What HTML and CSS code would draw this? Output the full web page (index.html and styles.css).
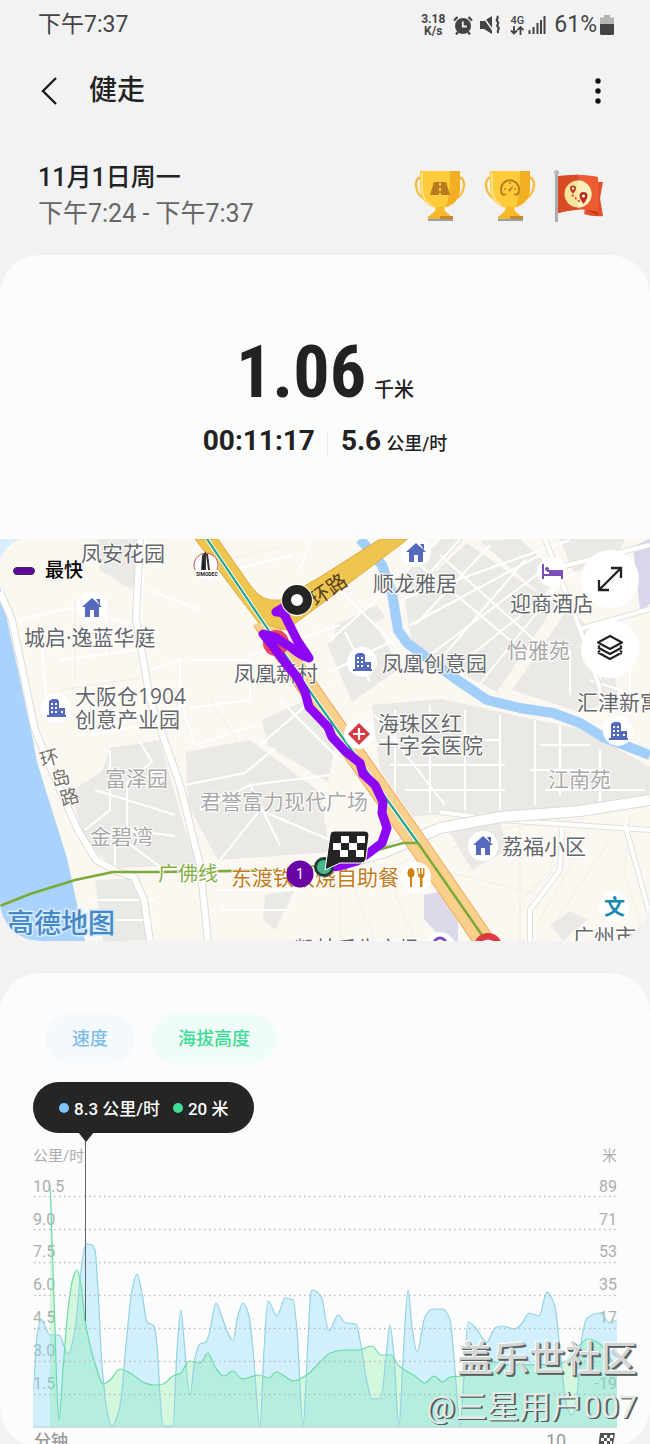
FILE: index.html
```html
<!DOCTYPE html>
<html lang="zh-CN">
<head>
<meta charset="utf-8">
<meta name="viewport" content="width=device-width, initial-scale=1">
<title>健走</title>
<link rel="stylesheet" href="styles.css">
</head>
<body>
<div class="screen">
  <header class="status">
    <span class="status-text">下午7:37</span>
    <div class="status-icons">
      <span class="net">3.18<br>K/s</span>
      <svg class="ic-alarm" width="20" height="20" viewBox="0 0 20 20"><circle cx="10" cy="11" r="8" fill="#444"/><path d="M1 5.500 4.500 2M19 5.500 15.500 2M5 17l-2 2.500M15 17l2 2.500" stroke="#444" stroke-width="2.200"/><path d="M9.800 6.500v5h4" stroke="#f2f2f2" stroke-width="1.800" fill="none"/></svg>
      <svg class="ic-mute" width="20" height="20" viewBox="0 0 20 20"><path d="M0 6h4l8-5v18l-8-5H0z" fill="#444"/><path d="M2 0l12 17" stroke="#f2f2f2" stroke-width="1.600"/><path d="M17 1c2.500 2 -2 3.500 .5 5.500s-2 3.500 .5 5.500 -2 3.500 .5 6" stroke="#444" stroke-width="2.200" fill="none"/></svg>
      <span class="gen"><span>4G</span><svg width="14" height="9" viewBox="0 0 14 9"><path d="M4 0v7M1 4.500l3 3 3-3M10.500 9V1M7.500 4l3-3 3 3" stroke="#444" stroke-width="1.800" fill="none"/></svg></span>
      <svg class="ic-signal" width="18" height="18" viewBox="0 0 18 18"><path d="M1.500 18v-4M5.500 18v-7M9.500 18v-11M13 18v-14M16.500 18V0" stroke="#444" stroke-width="2"/></svg>
      <span class="status-text">61%</span>
      <svg width="14" height="20" viewBox="0 0 14 20"><path d="M4 0h6v2.500h4V9H0V2.500h4z" fill="#b4b4b4"/><path d="M0 9h14v9.500q0 1.500-1.500 1.500h-11Q0 20 0 18.500z" fill="#444"/></svg>
    </div>
  </header>

  <nav class="bar">
    <button class="icon-btn" aria-label="返回"><svg width="18" height="30" viewBox="0 0 18 30"><path d="M16 2 3 15l13 13" fill="none" stroke="#1c1c1c" stroke-width="2.400"/></svg></button>
    <h1>健走</h1>
    <button class="icon-btn" aria-label="更多"><svg width="8" height="28" viewBox="0 0 8 28"><g fill="#111"><circle cx="4" cy="4" r="2.700"/><circle cx="4" cy="14" r="2.700"/><circle cx="4" cy="24" r="2.700"/></g></svg></button>
  </nav>

  <section class="session">
    <div>
      <p class="date">11月1日周一</p>
      <p class="range">下午7:24 - 下午7:37</p>
    </div>
    <div class="awards">
      <svg width="52" height="52" viewBox="0 0 52 52"><path d="M7 7.500C-1 7.500 0 27 14 30M45 7.500c8 0 7 19.500-7 22.500" fill="none" stroke="#f6bd3d" stroke-width="2.400"/><path d="M6 1h40v17c0 13-9 20-20 20S6 31 6 18z" fill="#fecb3b"/><path d="M36 1h10v17c0 10-6 17-14 19 3-7 4-20 4-36z" fill="#f2af23"/><path d="M8 3v15q0 12 9 17" stroke="#ffe08a" stroke-width="2" fill="none"/><path d="M22 37h8l1 4 7 6H14l7-6z" fill="#f7b927"/><path d="M14 46h25v4H14z" fill="#f0b535"/><path d="M26 46h13v4H26z" fill="#cf8625"/><path d="M14 49h25v2H14z" fill="#98a0a8"/><path d="M20 12h12l4 13H16z" fill="#b77a1c"/><path d="M26 13v3M26 18v3M26 23v2" stroke="#ffd463" stroke-width="1.600"/></svg>
      <svg width="52" height="52" viewBox="0 0 52 52"><path d="M7 7.500C-1 7.500 0 27 14 30M45 7.500c8 0 7 19.500-7 22.500" fill="none" stroke="#f6bd3d" stroke-width="2.400"/><path d="M6 1h40v17c0 13-9 20-20 20S6 31 6 18z" fill="#fecb3b"/><path d="M36 1h10v17c0 10-6 17-14 19 3-7 4-20 4-36z" fill="#f2af23"/><path d="M8 3v15q0 12 9 17" stroke="#ffe08a" stroke-width="2" fill="none"/><path d="M22 37h8l1 4 7 6H14l7-6z" fill="#f7b927"/><path d="M14 46h25v4H14z" fill="#f0b535"/><path d="M26 46h13v4H26z" fill="#cf8625"/><path d="M14 49h25v2H14z" fill="#98a0a8"/><path d="M19 25a9 9 0 1 1 14 0" fill="none" stroke="#b77a1c" stroke-width="2"/><path d="M20 19h2M26 12v2M32 19h-2M19 25l3-1M33 25l-3-1" stroke="#b77a1c" stroke-width="1.500"/><path d="M24 20l6-5-4 7z" fill="#b77a1c"/></svg>
      <svg width="52" height="52" viewBox="0 0 52 52"><path d="M36 12h13l-3 16 3 18q-10 1-19-2z" fill="#e2512c"/><path d="M30 38l14 8V12z" fill="#c23a1c"/><path d="M4 6c16-1 26-2 40 1v35c-13-4-24-3-40 1z" fill="#ef5b33"/><path d="M4 6q12-1 21-1.500v35Q14 40 4 43z" fill="#d94a27"/><circle cx="24" cy="24" r="13.500" fill="#ffe59b"/><path d="M24 10.500a13.500 13.500 0 0 1 0 27z" fill="#fff0bd"/><path d="M29.500 34c-3-4-4-6-4-8a4 4 0 0 1 8 0c0 2-1 4-4 8zM19 24c-2-3-3-4-3-5.500a3 3 0 0 1 6 0c0 1.500-1 2.500-3 5.500z" fill="#b9311b"/><circle cx="29.500" cy="26" r="1.500" fill="#fff"/><circle cx="19" cy="18.500" r="1.200" fill="#fff"/><path d="M18 25l8 7" stroke="#b9311b" stroke-width="1.500" stroke-dasharray="2 2"/><path d="M2.500 3v49" stroke="#a9adb2" stroke-width="3"/><circle cx="2.500" cy="2.500" r="2.500" fill="#b9bcc0"/></svg>
    </div>
  </section>

  <main>
  <section class="card workout">
    <div class="summary">
      <p class="distance"><span class="digits">1.06</span><span class="unit">千米</span></p>
      <p class="stats"><span class="num">00:11:17</span><span class="rule"></span><span class="num">5.6</span><span class="small">公里/时</span></p>
    </div>
    <div class="map">
      <svg class="map-art" viewBox="0 539 650 402" role="img" aria-label="路线地图">
        <rect y="539" width="650" height="402" fill="#fbf8f2"/>
        <path d="M0 539h20Q6 545 0 559z" fill="#d9edff"/>
        <path class="water" d="M0 587 33 740 37 762 67 858 85 941H0z"/>
        <g class="block">
          <path d="M97 539h43l-3 30-5 21-32-20zM110 748l50-8 25 90 16 35-86 3-32-27-11-50 30-20zM186 752l64-12 70 52 10 60-112 8-30-55zM262 720l40-18 34 38-8 42-60-36z"/>
          <path d="M405 600l62-57 88 62-58 87-85-45zM327 644l45-26 28 50-48 34zM372 705l70-6 80 18 60 12 68 38v33l-90 10-148 6-32-46zM560 539h65l-12 25-40 8z"/>
          <path d="M404 575l38-36h22l-50 55zM480 541l40-2 36 34-12 24zM512 690l55-80 40 30 12 60-40 12zM335 625l42-20 8 12-50 26z"/>
          <path d="M448 830l52-8 8 28-36 20zM95 880l45-2 8 62-45 2zM265 895l30-5-20 40-12-10zM550 925l20-14 18 8-25 22z"/>
        </g>
        <path d="M633 546l17-7v65l-10 6z" fill="#dad5ea"/><path d="M424 895l14-3 20 30v19h-14l-20-22z" fill="#ded8eb"/>
        <g class="lane">
          <path d="M10 622 70 608 145 628M145 540l-5 90 8 60M40 630l8 85M150 590l50 20M150 670l30-10v50l-30 8M190 660h60v40l-60 8M250 655l90-30M180 700l15 45 60-20M90 735l65-12M55 720l95-8M60 660l90-12M110 750v60l-25 20M140 742l12 20-25 20v60l40 30M185 785l60-12 30-25M200 810l50-25 30 60M250 785l80-10M220 860l40-50 70 30M280 700l60 60M260 745l70-60M95 790l80 25M115 868v-40l60 8M95 900h60M100 920h55M218 890h80M220 910h70M232 570l60-15M310 540l-10 30"/>
          <path d="M400 600l170-60M420 565l90 75M440 555l100 90M410 625l130-70M430 655l120-90M450 672l125-100M460 539l-40 45M490 545l-75 80M525 560l-85 100M555 590l-80 100M345 632l25 50M330 672l60-30M330 640l55-48M335 585l60 60M375 715l70 90M395 710v100M430 705v108M465 710v100M500 715v95M380 740h120M390 765h115M405 790h100M535 720v85M560 725v70M600 750v55M540 745h50M530 770h75M545 790h100M590 680l60 20M570 650v45M600 660v50M630 650v60"/>
        </g>
        <g class="lane faint">
          <path d="M390 880l25 61M410 860l-80 30M440 870l100 25M520 825v116M560 815l-10 60-30 25v41M630 815l-6 60 20 60M450 850l40-20 100-12M590 830l-50 90M610 840l-60 90M470 900l80-70M500 920l60-60M340 895v46M355 890l20 51M50 640l90-14M60 690l80-12M75 600v80M110 600v60M210 700l30 45M225 560l60-14"/>
        </g>
        <g class="street-edge"><path d="M0 592 12 620 35 730 60 790 78 830 96 860 116 871 134 877 144 900 150 941M140 539l-4 80 14 80 30 86 20 80 8 76"/></g>
        <g class="street"><path d="M0 592 12 620 35 730 60 790 78 830 96 860 116 871 134 877 144 900 150 941M140 539l-4 80 14 80 30 86 20 80 8 76"/></g>
        <path class="minor-edge" d="M545 539l35 90 20 60M580 629l70-20M548 570l102-25M440 812l60 8 150 10M625 825l25 90M562 830l-2 40-30 40v31"/>
        <path class="minor" d="M545 539l35 90 20 60M580 629l70-20M548 570l102-25M440 812l60 8 150 10M625 825l25 90M562 830l-2 40-30 40v31"/>
        <path d="M320 870 385 852 440 828 500 817 580 811 650 800" fill="none" stroke="#dddbd7" stroke-width="12"/>
        <path d="M320 870 385 852 440 828 500 817 580 811 650 800" fill="none" stroke="#fff" stroke-width="10"/>
        <path class="river" d="M360 539 382 565 392 593 398 630 407 643 430 660 453 677 487 700 520 708 553 713 580 723 603 737 650 755"/>
        <path d="M262 620 320 705 417 843 487 945" fill="none" stroke="#e9ac5e" stroke-width="21"/>
        <path d="M262 620 320 705 417 843 487 945" fill="none" stroke="#fbd08c" stroke-width="19"/>
        <path d="M380 539h28L320 605 286 630 258 622 195 539h23l32 46q12 18 30 15l40-23z" fill="#eec54e" stroke="#e0a944" stroke-width="1"/>
        <path d="M207 539 267 628 320 706 418 843" fill="none" stroke="#fff" stroke-width="4"/>
        <path d="M207 539 267 628 320 706 418 843" fill="none" stroke="#22a58f" stroke-width="2.200"/>
        <path d="M0 906 30 894 75 880 113 872 160 872 300 870 385 848 403 843 418 843 484 938" fill="none" stroke="#7eaa39" stroke-width="2.600"/>
        <circle cx="488" cy="947" r="14" fill="#dc3a45"/><path d="M482 943q6-5 12 0" fill="none" stroke="#fff" stroke-width="2"/>
        <circle cx="276" cy="643" r="13" fill="#ec4458"/>

        <g fill="#fff">
          <circle cx="92" cy="607" r="15"/><circle cx="56" cy="708" r="15"/><circle cx="416" cy="552" r="15"/><circle cx="552" cy="572" r="15"/><circle cx="362" cy="662" r="15"/><circle cx="359" cy="734" r="15"/><circle cx="618" cy="731" r="15"/><circle cx="483" cy="846" r="15"/><circle cx="416" cy="877" r="15"/><circle cx="614" cy="907" r="15"/><circle cx="440" cy="947" r="15"/><circle cx="206" cy="566" r="13"/>
        </g>
        <defs>
          <path id="house" d="M0-10 10-1H7V9H2V2H-2V9H-7V-1H-10zM4-9h4v6z"/>
          <path id="tower" fill-rule="evenodd" d="M-7 7V-7l3-2h5l2 2v7h6v7h1v2H-9V7zM-5-5h2v2h-2zM-1-5h2v2h-2zM-5-1h2v2h-2zM-1-1h2v2h-2zM-5 3h2v2h-2zM-1 3h2v2h-2zM5 3h2v2H5z"/>
        </defs>
        <g fill="#5569bd"><use href="#house" x="92" y="608"/><use href="#house" x="416" y="553"/><use href="#house" x="483" y="846"/><use href="#tower" x="56" y="708"/><use href="#tower" x="362" y="662"/><use href="#tower" x="618" y="731"/></g>
        <path d="M543 564v15M543 575h19M562 579v-8h-15" fill="none" stroke="#7b4fb8" stroke-width="2"/><path d="M549 570h13v4h-13z" fill="#7b4fb8"/><circle cx="547" cy="569" r="2" fill="#7b4fb8"/>
        <path d="M359 723l11 11-11 11-11-11z" fill="#d53c42"/><path d="M359 728v12M353 734h12" stroke="#fff" stroke-width="2.200"/>
        <g fill="#d18210"><ellipse cx="411" cy="873" rx="3.500" ry="5"/><path d="M410 876h2v11h-2zM417 868h1.500v6h1.500v-6h1.500v6h1.500v-6h1.500v7q0 2-2 3v9h-2.500v-9q-2-1-2-3z"/></g>
        <path d="M195 570a12 12 0 1 1 22 0" fill="none" stroke="#c7474d" stroke-width="1"/><path d="M202 570l1-14 2-2v16M207 554l2 16" stroke="#333" stroke-width="2"/>
        <text class="brand" x="196" y="576">SIMODEC</text>
        <circle cx="440" cy="944" r="6" fill="none" stroke="#7b4fb8" stroke-width="3"/>
        <text class="poi school" x="604" y="914">文</text>

        <g class="poi">
          <text x="81" y="561">凤安花园</text><text x="24" y="645">城启·逸蓝华庭</text>
          <text x="75" y="704">大阪仓1904</text><text x="75" y="727">创意产业园</text>
          <text x="234" y="681">凤凰新村</text><text x="373" y="591">顺龙雅居</text><text x="510" y="611">迎商酒店</text>
          <text x="382" y="671">凤凰创意园</text><text x="577" y="710">汇津新寓</text>
          <text x="378" y="731">海珠区红</text><text x="378" y="753">十字会医院</text>
          <text x="502" y="854">荔福小区</text><text x="573" y="944">广州市第</text><text x="294" y="956">凯林禾生市场</text>
        </g>
        <g class="poi area"><text x="507" y="658">怡雅苑</text><text x="105" y="786">富泽园</text><text x="90" y="844">金碧湾</text><text x="200" y="809">君誉富力现代广场</text><text x="548" y="787">江南苑</text></g>
        <g class="poi road"><text transform="translate(42 767) rotate(-15)">环</text><text transform="translate(53 787) rotate(-15)">岛</text><text transform="translate(62 806) rotate(-15)">路</text></g>
        <g class="poi highway"><text transform="translate(316 607) rotate(-35)">环路</text></g>
        <text class="poi metro" x="158" y="881">广佛线</text>
        <text class="poi food" x="231" y="885">东渡铁板烧自助餐</text>
        <text class="amap" x="7" y="933">高德地图</text>

        <path class="route" d="M288 605 276 612Q284 611 287 620L297 640 309 658Q300 655 292 648L275 637 263 634 272 645 287 665 297 677 305 692 309 707 328 727 332 737 345 751 360 763 363 774 375 785 383 802 382 813 387 828 382 843 370 852 357 861 340 866 323 868"/>
        <circle cx="297" cy="600" r="16" fill="#fff"/><circle cx="297" cy="600" r="10.500" fill="#fff" stroke="#242424" stroke-width="9"/>
        <circle cx="324" cy="867" r="8.500" fill="#45b98a" stroke="#263d39" stroke-width="3"/>
        <path d="M334 831h31q4 0 4 4l-3 24q-1 4-5 4h-21l-15 7 5-35q0-4 4-4z" fill="#232323" stroke="#fff" stroke-width="1"/>
        <path d="M341 836h8v7h-8zM357 836h8v7h-8zM333 843h8v7h-8zM349 843h8v7h-8zM340 850h8v7h-8zM356 850h8v7h-8z" fill="#fff"/>
        <circle cx="300" cy="874" r="13.500" fill="#6903a7"/><text class="lap" x="300" y="879">1</text>
      </svg>
      <p class="legend"><span class="swatch"></span>最快</p>
      <div class="map-tools">
        <button aria-label="全屏"><svg width="28" height="28" viewBox="0 0 28 28"><path d="M3 25 25 3M15 3h10v10M3 15v10h10" fill="none" stroke="#222" stroke-width="2.300"/></svg></button>
        <button aria-label="图层"><svg width="28" height="28" viewBox="0 0 28 28"><path d="M14 1 26 7.500 14 14 2 7.500zM2 12l2-1M26 12l-2-1M2 12.500 14 19l12-6.500M2 17.500l12 6.500 12-6.500M4 15.500l-2 2M24 15.500l2 2" fill="none" stroke="#222" stroke-width="2" stroke-linejoin="round"/></svg></button>
      </div>
    </div>
  </section>

  <section class="card trend">
    <div class="pills"><button class="pill speed">速度</button><button class="pill altitude">海拔高度</button></div>
    <div class="tip"><span class="dot blue"></span>8.3 公里/时<span class="dot green"></span>20 米</div>
    <svg class="chart" viewBox="0 1133 650 314" role="img" aria-label="速度与海拔高度">
      <g class="axis">
        <text x="33" y="1161" class="axis-unit">公里/时</text><text x="33" y="1192">10.5</text><text x="33" y="1225">9.0</text><text x="33" y="1257">7.5</text><text x="33" y="1290">6.0</text><text x="33" y="1323">4.5</text><text x="33" y="1356">3.0</text><text x="33" y="1389">1.5</text>
        <g text-anchor="end"><text x="617" y="1161" class="axis-unit">米</text><text x="617" y="1192">89</text><text x="617" y="1225">71</text><text x="617" y="1257">53</text><text x="617" y="1290">35</text><text x="617" y="1323">17</text><text x="617" y="1389">-19</text></g>
      </g>
      <path id="speed-area" fill="rgba(128,214,252,.35)"/><path id="altitude-area" fill="rgba(107,237,145,.28)"/>
      <path id="speed-line" class="line" stroke="#93d2e2"/><path id="altitude-line" class="line" stroke="#6bdba6"/>
      <path class="grid" d="M34 1196.500H617M34 1229.500H617M34 1262.500H617M34 1295.500H617M34 1328.500H617M34 1361.500H617M34 1394.500H617"/>
      <path d="M33 1427H617" stroke="#bcd9d9" stroke-width="1.500"/>
      <path d="M85.500 1133V1321" stroke="#666" stroke-width="1"/>
      <text class="minute" x="34" y="1447">分钟</text><text class="tick" x="546" y="1447">10</text>
      <path d="M600 1433h15l-2 12h-10l-5 4z" fill="#555"/><path d="M604 1435h3v3h-3zM610 1435h3v3h-3zM601 1438h3v3h-3zM607 1438h3v3h-3zM604 1441h3v3h-3zM610 1441h2v3h-2z" fill="#fff"/>
    </svg>
  </section>
  </main>
  <div class="watermark"><span class="site">盖乐世社区</span><span class="user">@三星用户007</span></div>
</div>
<script src="chart.js"></script>
</body>
</html>
```
FILE: styles.css
```css
* { box-sizing: border-box; }
html, body { margin: 0; }
body { background: #f2f2f2; color: #222; font-family: Roboto, "Noto Sans CJK SC", sans-serif; }
p, h1 { margin: 0; }
button { border: 0; padding: 0; background: none; font: inherit; color: inherit; }
svg { display: block; flex: none; }

.screen { position: relative; height: 100vh; overflow: hidden; }

.status { display: flex; justify-content: space-between; align-items: center; height: 50px; padding: 0 36px 0 38px; color: #444; }
.status-text { font-size: 23px; line-height: 32px; }
.status-icons { display: flex; align-items: center; }
.net { font-size: 12px; line-height: 12px; font-weight: 700; text-align: center; }
.ic-alarm { margin-left: 8px; }
.ic-mute { margin-left: 7px; }
.gen { display: flex; flex-direction: column; align-items: center; margin-left: 10px; font-size: 11px; line-height: 11px; font-weight: 500; }
.ic-signal { margin: 0 8px 0 4px; }
.status-icons .status-text { margin-right: 3px; }

.bar { display: flex; align-items: center; height: 82px; padding: 0 48px 0 40px; }
.bar h1 { flex: 1; margin-left: 31px; font-size: 28px; line-height: 40px; font-weight: 500; }

.session { display: flex; justify-content: space-between; align-items: center; padding: 28px 44px 22px 38px; }
.session .date { font-size: 25px; line-height: 36px; font-weight: 500; }
.session .range { font-size: 25px; line-height: 36px; color: #666; }
.awards { display: flex; gap: 18px; }

.card { background: #fcfcfc; overflow: hidden; }
.workout { border-radius: 40px; margin-top: 1px; }
.summary { height: 284px; display: flex; flex-direction: column; align-items: center; padding-top: 78px; }
.distance { display: flex; align-items: baseline; gap: 8px; }
.digits { font-family: "Liberation Sans Narrow", "Roboto Condensed", Roboto, sans-serif; font-size: 72px; line-height: 80px; font-weight: 700; }
.unit { font-size: 20px; font-weight: 500; }
.stats { display: flex; align-items: baseline; margin-top: 10px; line-height: 36px; }
.num { font-size: 28px; font-weight: 700; }
.rule { width: 1px; height: 24px; margin: 0 13px 0 12px; align-self: center; background: #e8e8e8; }
.small { margin-left: 5px; font-size: 18px; font-weight: 500; }

.map { position: relative; }
.map-art { width: 100%; height: auto; }
.water { fill: #a9d2fc; }
.block { fill: #ebe9e5; }
.lane { fill: none; stroke: #fff; stroke-width: 2; }
.faint { stroke: #f1eee9; stroke-width: 1; }
.street-edge { fill: none; stroke: #dfdcd6; stroke-width: 8; }
.street { fill: none; stroke: #fff; stroke-width: 6; }
.minor-edge { fill: none; stroke: #e3e0db; stroke-width: 6; }
.minor { fill: none; stroke: #fff; stroke-width: 4; }
.river { fill: none; stroke: #a2cffa; stroke-width: 10; stroke-linejoin: round; }
.route { fill: none; stroke: #8d06f6; stroke-width: 9; stroke-linejoin: round; stroke-linecap: round; }
.poi { font-family: "Open Sans", "Noto Sans CJK SC", sans-serif; font-size: 21px; fill: #65676b; paint-order: stroke; stroke: #fff; stroke-width: 2px; font-weight: 400; }
.area { fill: #a8a8a8; }
.road { fill: #77716a; font-size: 19px; }
.highway { fill: #59401c; font-size: 20px; stroke: none; }
.metro { fill: #83ae43; font-size: 20px; }
.food { fill: #c47a1b; }
.school { fill: #1689ad; font-weight: 700; }
.amap { font-family: "Noto Sans CJK SC", sans-serif; font-size: 27px; font-weight: 500; fill: #4488c6; paint-order: stroke; stroke: #d8ebfb; stroke-width: 3px; }
.brand { font-size: 5px; font-weight: 700; fill: #222; }
.lap { fill: #fff; font-size: 14px; text-anchor: middle; }
.legend { position: absolute; top: 20px; left: 13px; display: flex; align-items: center; gap: 10px; font-size: 19px; line-height: 24px; font-weight: 500; color: #000; }
.swatch { width: 22px; height: 8px; border-radius: 4px; background: #5c0b99; border: 1px solid #3f2763; }
.map-tools { position: absolute; top: 11px; right: 11px; display: flex; flex-direction: column; gap: 12px; }
.map-tools button { display: grid; place-items: center; width: 58px; height: 58px; border-radius: 50%; background: #fff; }

.trend { margin-top: 32px; border-radius: 40px; padding-top: 41px; }
.pills { display: flex; gap: 16px; margin-left: 45px; }
.pill { height: 49px; padding: 0 27px 3px; border-radius: 25px; font-size: 18px; font-weight: 500; }
.speed { background: #f4f9fe; color: #7fbce8; }
.altitude { background: #effcf7; color: #3ddb97; }
.tip { position: relative; display: flex; align-items: center; width: max-content; height: 51px; margin: 19px 0 0 33px; padding: 0 26px; border-radius: 26px; background: #252525; color: #fff; font-size: 17px; font-weight: 500; }
.tip::after { content: ""; position: absolute; top: 50px; left: 45px; border: 8px solid transparent; border-top: 10px solid #252525; border-bottom: 0; }
.dot { width: 10px; height: 10px; margin-right: 5px; border-radius: 50%; }
.dot.blue { background: #7fc4fa; }
.dot.green { margin-left: 13px; background: #3ddc97; }
.chart { width: 100%; height: auto; }
.axis { font-size: 16px; fill: #acaeae; }
.axis-unit { font-size: 15px; }
.line { fill: none; stroke-width: 1.2px; }
.grid { fill: none; stroke: #b8bcbc; stroke-width: 1.5px; stroke-dasharray: 1.5 3.5; }
.minute { font-size: 17px; font-weight: 500; fill: #999; }
.tick { font-size: 18px; fill: #999; }

.watermark { position: absolute; right: 13px; bottom: 13px; display: flex; flex-direction: column; align-items: flex-end; color: #d4d6d6; text-shadow: -1px -1px 0 #fff, 1px 1px 0 #555c5a, 2px 2px 0 #6a7270; }
.site { font-size: 36px; line-height: 46px; font-weight: 500; }
.user { font-size: 32px; line-height: 48px; color: #e2eae8; text-shadow: 1px 1px 0 #555c5a, 2px 1px 0 #59605e; }
```
FILE: chart.js
```js
const speed = [[33,1390],[37,1336],[41,1319],[50,1335],[59,1335],[68,1354],[75,1330],[81,1270],[86,1244],[92,1245],[95,1250],[98,1290],[102,1365],[108,1416],[112,1426],[120,1406],[126,1345],[132,1290],[137,1274],[142,1293],[147,1322],[154,1326],[157,1345],[161,1410],[163,1426],[173,1426],[177,1350],[181,1310],[184,1340],[190,1395],[195,1358],[200,1344],[206,1342],[210,1330],[216,1303],[222,1317],[228,1333],[233,1341],[238,1315],[243,1303],[249,1316],[253,1350],[260,1426],[264,1350],[268,1301],[277,1316],[285,1298],[293,1300],[297,1330],[303,1426],[308,1340],[311,1292],[313,1290],[321,1296],[329,1331],[338,1315],[346,1323],[356,1324],[360,1340],[367,1382],[372,1399],[381,1398],[386,1357],[390,1325],[394,1357],[399,1426],[403,1360],[408,1290],[412,1327],[417,1352],[425,1317],[432,1309],[443,1309],[450,1320],[455,1370],[460,1426],[464,1376],[468,1322],[475,1327],[487,1342],[495,1328],[502,1326],[515,1329],[523,1322],[529,1313],[539,1316],[547,1292],[555,1307],[560,1350],[567,1407],[572,1415],[576,1403],[582,1337],[587,1318],[600,1313],[610,1323],[617,1320]];
const altitude = [[50,1185],[52,1240],[55,1330],[57,1390],[59,1420],[63,1370],[68,1310],[73,1278],[77,1270],[81,1285],[85,1320],[90,1345],[97,1370],[103,1384],[110,1380],[120,1369],[130,1373],[145,1383],[153,1385],[163,1384],[173,1376],[181,1373],[189,1361],[200,1363],[208,1353],[215,1367],[224,1376],[233,1371],[242,1379],[259,1375],[269,1378],[276,1372],[294,1381],[308,1374],[320,1362],[330,1353],[345,1350],[358,1350],[372,1346],[381,1355],[391,1355],[399,1366],[415,1376],[425,1383],[434,1376],[443,1382],[450,1377],[464,1376],[480,1370],[493,1362],[510,1365],[560,1364],[575,1350],[588,1339],[600,1344],[617,1365]];
const BASE = 1427;

// Cubic curve through the points that never overshoots a local peak.
function curve(points) {
  const slope = points.map((p, i) => {
    const a = points[i - 1], b = points[i + 1];
    if (!a || !b) return 0;
    const l = (p[1] - a[1]) / (p[0] - a[0]), r = (b[1] - p[1]) / (b[0] - p[0]);
    return l * r <= 0 ? 0 : 2 * l * r / (l + r);
  });
  return points.map((p, i) => {
    if (!i) return `M${p}`;
    const a = points[i - 1], h = (p[0] - a[0]) / 3;
    return `C${a[0] + h},${a[1] + slope[i - 1] * h} ${p[0] - h},${p[1] - slope[i] * h} ${p}`;
  }).join("");
}

for (const [name, points] of [["speed", speed], ["altitude", altitude]]) {
  const d = curve(points);
  document.getElementById(name + "-line").setAttribute("d", d);
  document.getElementById(name + "-area").setAttribute("d", `${d}V${BASE}H${points[0][0]}Z`);
}
```
